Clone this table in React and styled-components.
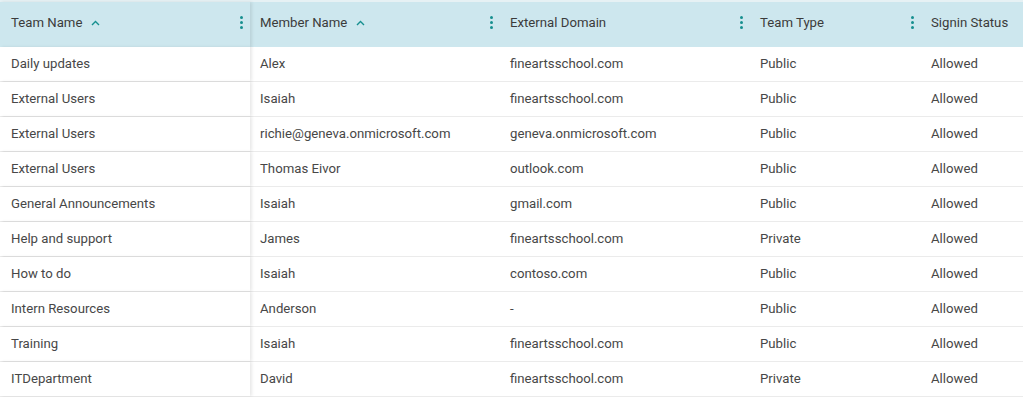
import styled, { createGlobalStyle } from "styled-components";

const GlobalStyle = createGlobalStyle`
  body {
    margin: 0;
    font-family: Roboto, "Liberation Sans", sans-serif;
    background: #fff;
    overflow: hidden;
  }
`;

const Grid = styled.div`
  width: 100%;
  border-top: 2px solid #e6f1f4;
`;

const Row = styled.div`
  display: grid;
  grid-template-columns: 250px 250px 250px 171px 1fr;
  height: ${(p) => (p.$head ? "45px" : "35px")};
  background: ${(p) => (p.$head ? "#cde7ee" : "#fff")};
  border-bottom: ${(p) => (p.$head ? "none" : "1px solid #ebebeb")};
  box-sizing: border-box;
`;

const Cell = styled.div`
  display: flex;
  align-items: center;
  padding: 0 10px ${(p) => (p.$head ? "4px" : "2px")} 10px;
  font-size: 13.2px;
  color: ${(p) => (p.$head ? "#3b3b3b" : "#474747")};
  white-space: nowrap;
  overflow: hidden;
  position: relative;

  ${(p) =>
    p.$pinned &&
    `
    padding-left: 11px;
    box-shadow: 2px 0 3px rgba(0, 0, 0, 0.09);
    z-index: 1;
    background: inherit;
  `}
`;

const Label = styled.span`
  flex: 1;
  display: flex;
  align-items: center;
  gap: 9px;
`;

const Kebab = styled.span`
  display: flex;
  flex-direction: column;
  gap: 2px;
  margin-right: -3px;

  i {
    width: 3px;
    height: 3px;
    border-radius: 50%;
    background: #168f8f;
  }
`;

const SortUp = () => (
  <svg width="9" height="6" viewBox="0 0 9 6">
    <path d="M1 5 L4.5 1.5 L8 5" fill="none" stroke="#168f8f" strokeWidth="1.4" />
  </svg>
);

const columns = [
  { label: "Team Name", sort: true },
  { label: "Member Name", sort: true },
  { label: "External Domain" },
  { label: "Team Type" },
  { label: "Signin Status", noMenu: true },
];

const rows = [
  ["Daily updates", "Alex", "fineartsschool.com", "Public", "Allowed"],
  ["External Users", "Isaiah", "fineartsschool.com", "Public", "Allowed"],
  ["External Users", "richie@geneva.onmicrosoft.com", "geneva.onmicrosoft.com", "Public", "Allowed"],
  ["External Users", "Thomas Eivor", "outlook.com", "Public", "Allowed"],
  ["General Announcements", "Isaiah", "gmail.com", "Public", "Allowed"],
  ["Help and support", "James", "fineartsschool.com", "Private", "Allowed"],
  ["How to do", "Isaiah", "contoso.com", "Public", "Allowed"],
  ["Intern Resources", "Anderson", "-", "Public", "Allowed"],
  ["Training", "Isaiah", "fineartsschool.com", "Public", "Allowed"],
  ["ITDepartment", "David", "fineartsschool.com", "Private", "Allowed"],
];

const App = () => (
  <>
    <GlobalStyle />
    <Grid>
      <Row $head>
        {columns.map((c, i) => (
          <Cell key={c.label} $head $pinned={i === 0}>
            <Label>
              {c.label}
              {c.sort && <SortUp />}
            </Label>
            {!c.noMenu && (
              <Kebab>
                <i />
                <i />
                <i />
              </Kebab>
            )}
          </Cell>
        ))}
      </Row>
      {rows.map((r, i) => (
        <Row key={i}>
          {r.map((v, j) => (
            <Cell key={j} $pinned={j === 0}>
              {v}
            </Cell>
          ))}
        </Row>
      ))}
    </Grid>
  </>
);

export default App;
